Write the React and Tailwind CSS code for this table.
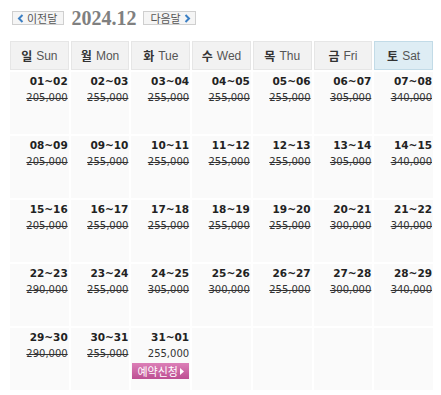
import React from 'react';

const days = [
  { ko: '일', en: 'Sun' },
  { ko: '월', en: 'Mon' },
  { ko: '화', en: 'Tue' },
  { ko: '수', en: 'Wed' },
  { ko: '목', en: 'Thu' },
  { ko: '금', en: 'Fri' },
  { ko: '토', en: 'Sat' },
];

const weeks = [
  [['01~02', '205,000'], ['02~03', '255,000'], ['03~04', '255,000'], ['04~05', '255,000'], ['05~06', '255,000'], ['06~07', '305,000'], ['07~08', '340,000']],
  [['08~09', '205,000'], ['09~10', '255,000'], ['10~11', '255,000'], ['11~12', '255,000'], ['12~13', '255,000'], ['13~14', '305,000'], ['14~15', '340,000']],
  [['15~16', '205,000'], ['16~17', '255,000'], ['17~18', '255,000'], ['18~19', '255,000'], ['19~20', '255,000'], ['20~21', '300,000'], ['21~22', '340,000']],
  [['22~23', '290,000'], ['23~24', '255,000'], ['24~25', '305,000'], ['25~26', '300,000'], ['26~27', '255,000'], ['27~28', '300,000'], ['28~29', '340,000']],
  [['29~30', '290,000'], ['30~31', '255,000'], ['31~01', '255,000', true], null, null, null, null],
];

const font = { fontFamily: '"DejaVu Sans", Verdana, "Noto Sans CJK KR", sans-serif' };

const NavButton = ({ children }) => (
  <button className="h-[14px] px-[4px] flex items-center gap-[3px] border border-[#cfcfcf] bg-[#f5f5f5] text-[11px] leading-none text-[#555] font-['Noto_Sans_CJK_KR',sans-serif]">
    {children}
  </button>
);

const Chevron = ({ dir }) => (
  <svg width="7" height="9" viewBox="0 0 7 9">
    <path
      d={dir === 'left' ? 'M5.5 1 L2 4.5 L5.5 8' : 'M1.5 1 L5 4.5 L1.5 8'}
      fill="none"
      stroke="#3b7fc4"
      strokeWidth="2"
    />
  </svg>
);

export default function App() {
  return (
    <div className="w-[441px] h-[395px] bg-white pl-[10px] pr-[8px] pt-[11px]" style={font}>
      {/* month nav */}
      <div className="flex items-center h-[14px] gap-[7px] pl-[2px]">
        <NavButton>
          <Chevron dir="left" />
          <span className="pr-[2px]">이전달</span>
        </NavButton>
        <span className="text-[20px] font-bold text-[#808080] leading-none font-['Liberation_Serif',serif]">2024.12</span>
        <NavButton>
          <span className="pl-[2px]">다음달</span>
          <Chevron dir="right" />
        </NavButton>
      </div>

      {/* header */}
      <div className="grid grid-cols-7 gap-[2px] mt-[16px]">
        {days.map((d, i) => (
          <div
            key={d.en}
            className={`h-[29px] flex items-center justify-center gap-[4px] border text-[12px] text-[#555] ${
              i === 6 ? 'bg-[#deedf4] border-[#c2dbe7]' : 'bg-[#f2f2f2] border-[#e6e6e6]'
            }`}
          >
            <span className="font-['Noto_Sans_CJK_KR',sans-serif] font-bold text-[#333]">{d.ko}</span>
            <span className="font-['Liberation_Sans',sans-serif] text-[12px]">{d.en}</span>
          </div>
        ))}
      </div>

      {/* body */}
      <div className="grid grid-cols-7 gap-[2px] mt-[2px]">
        {weeks.flat().map((c, i) => (
          <div key={i} className="h-[62px] bg-[#fafafa] pr-[1px] pt-[1px] flex flex-col items-end">
            {c && (
              <>
                <span className="text-[10.5px] font-bold text-[#222] leading-[16px]">{c[0]}</span>
                <span className={`text-[10px] text-[#333] leading-[17px] ${c[2] ? '' : 'line-through'}`}>{c[1]}</span>
                {c[2] && (
                  <button className="mt-[1px] h-[16px] w-[57px] flex items-center justify-center gap-[2px] bg-gradient-to-b from-[#dc7fb7] to-[#bd4f93] text-white text-[11px] leading-none font-['Noto_Sans_CJK_KR',sans-serif]">
                    예약신청
                    <svg width="4" height="7" viewBox="0 0 4 7">
                      <path d="M0 0 L4 3.5 L0 7 Z" fill="#fff" />
                    </svg>
                  </button>
                )}
              </>
            )}
          </div>
        ))}
      </div>
    </div>
  );
}
